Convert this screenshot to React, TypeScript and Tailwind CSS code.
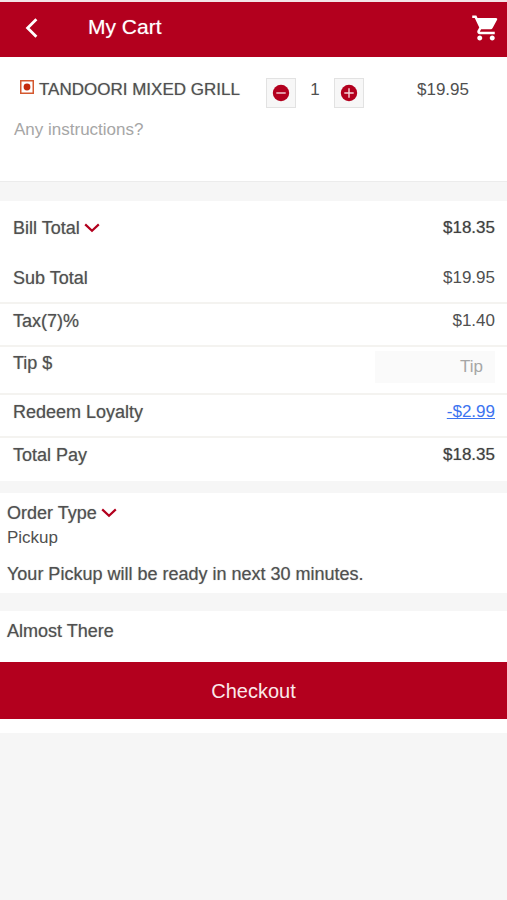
import React, { useState } from 'react';
import { MdShoppingCart } from 'react-icons/md';

interface BillRowProps {
  label: string;
  children: React.ReactNode;
  last?: boolean;
}

const ChevronDown: React.FC = () => (
  <svg width="16" height="10" viewBox="0 0 16 10" fill="none" stroke="#b3001e" strokeWidth="2.2" aria-hidden="true">
    <path d="M1.2 1.4 8 7.8l6.8-6.4" />
  </svg>
);

const NonVegMark: React.FC = () => (
  <svg width="14" height="14" viewBox="0 0 14 14" aria-hidden="true">
    <rect x="0.75" y="0.75" width="12.5" height="12.5" fill="#fff" stroke="#d4582f" strokeWidth="1.5" />
    <circle cx="7" cy="7" r="3.4" fill="#c42a0c" />
  </svg>
);

const StepIcon: React.FC<{ plus?: boolean }> = ({ plus }) => (
  <svg width="18" height="18" viewBox="0 0 18 18" aria-hidden="true">
    <circle cx="9" cy="9" r="8.2" fill="#b3001e" />
    <path d={plus ? 'M4.3 9h9.4M9 4.3v9.4' : 'M4.3 9h9.4'} stroke="#f6d5da" strokeWidth="1.4" />
  </svg>
);

const BillRow: React.FC<BillRowProps> = ({ label, children, last }) => (
  <div className={`flex items-start justify-between pl-[13px] pr-3 pt-[5px] h-[43px] ${last ? '' : 'border-b-2 border-[#f4f3f0]'}`}>
    <span className="text-[18px] leading-6 [text-shadow:0_0_1px_#4a4a4a80]">{label}</span>
    {children}
  </div>
);

export default function App() {
  const [quantity, setQuantity] = useState(1);
  const [tip, setTip] = useState('');
  const [instructions, setInstructions] = useState('');

  return (
    <div className="min-h-screen bg-[#f6f6f6] font-['Liberation_Sans',Arial,sans-serif] text-[17px] leading-6 text-[#505050]">
      <header className="flex items-center h-[57px] border-t-2 border-[#f3e4e6] bg-[#b3001e] text-white pl-[25px] pr-[6px] pb-[3px]">
        <button type="button" aria-label="Back" className="w-[63px]">
          <svg width="13" height="20" viewBox="0 0 13 20" fill="none" stroke="currentColor" strokeWidth="2.8" aria-hidden="true">
            <path d="M11.4 1.2 2.6 10l8.8 8.8" />
          </svg>
        </button>
        <h1 className="flex-1 text-[21px] leading-6 pb-[2px] [text-shadow:0_0_1px_#ffffff80]">My Cart</h1>
        <button type="button" aria-label="Cart">
          <MdShoppingCart size={30} />
        </button>
      </header>

      <main>
        {/* Cart item */}
        <section className="bg-white border-b border-[#ececec] pt-[21px] h-[125px]">
          <div className="flex items-start pl-5 pr-[38px]">
            <div className="flex flex-1 items-start gap-[5px]">
              <div className="pt-[2px]">
                <NonVegMark />
              </div>
              <h2 className="whitespace-nowrap [text-shadow:0_0_1px_#4a4a4a80]">TANDOORI MIXED GRILL</h2>
            </div>
            <div className="flex items-start">
              <button
                type="button"
                aria-label="Decrease quantity"
                onClick={() => setQuantity(Math.max(1, quantity - 1))}
                className="flex items-center justify-center size-[30px] border border-[#e2e2e2] bg-[#f7f7f7]"
              >
                <StepIcon />
              </button>
              <span className="w-[38px] text-center">{quantity}</span>
              <button
                type="button"
                aria-label="Increase quantity"
                onClick={() => setQuantity(quantity + 1)}
                className="flex items-center justify-center size-[30px] border border-[#e2e2e2] bg-[#f7f7f7]"
              >
                <StepIcon plus />
              </button>
            </div>
            <span className="w-[105px] text-right">$19.95</span>
          </div>
          <textarea
            aria-label="Any instructions?"
            placeholder="Any instructions?"
            rows={2}
            value={instructions}
            onChange={(e) => setInstructions(e.target.value)}
            className="block w-full resize-none px-[14px] pt-[10px] leading-6 outline-none placeholder:text-[#a6a6a6]"
          />
        </section>

        {/* Bill breakdown */}
        <section className="mt-[19px] bg-white">
          <div className="flex items-center justify-between h-[53px] pl-[13px] pr-3">
            <button type="button" className="flex items-center gap-1 text-[18px] leading-6 [text-shadow:0_0_1px_#4a4a4a80]">
              Bill Total
              <ChevronDown />
            </button>
            <span className="text-[#404040] [text-shadow:0_0_1px_#3c3c3c80]">$18.35</span>
          </div>
          <div className="pt-[7px]">
            <BillRow label="Sub Total">
              <span>$19.95</span>
            </BillRow>
            <BillRow label="Tax(7)%">
              <span>$1.40</span>
            </BillRow>
            <div className="flex items-start justify-between h-12 pl-[13px] pr-3 pt-1 border-b-2 border-[#f4f3f0]">
              <label htmlFor="tip" className="text-[18px] leading-6 [text-shadow:0_0_1px_#4a4a4a80]">
                Tip $
              </label>
              <input
                id="tip"
                type="text"
                inputMode="decimal"
                placeholder="Tip"
                value={tip}
                onChange={(e) => setTip(e.target.value)}
                className="w-[120px] h-8 pr-3 bg-[#fafafa] text-right outline-none placeholder:text-[#a6a6a6]"
              />
            </div>
            <BillRow label="Redeem Loyalty">
              <a href="#loyalty" className="text-[#3d74f0] underline">
                -$2.99
              </a>
            </BillRow>
            <BillRow label="Total Pay" last>
              <span className="text-[#404040] [text-shadow:0_0_1px_#3c3c3c80]">$18.35</span>
            </BillRow>
          </div>
        </section>

        {/* Order type */}
        <section className="mt-3 bg-white px-[7px] pt-2 pb-[7px]">
          <button type="button" className="flex items-center gap-1 text-[18px] leading-6 [text-shadow:0_0_1px_#4a4a4a80]">
            Order Type
            <ChevronDown />
          </button>
          <p className="pt-px">Pickup</p>
          <p className="pt-3 text-[18px] leading-6 [text-shadow:0_0_1px_#4a4a4a80]">
            Your Pickup will be ready in next 30 minutes.
          </p>
        </section>

        <section className="mt-[18px] bg-white pb-[14px]">
          <h2 className="h-[51px] px-[7px] pt-2 text-[18px] leading-6 [text-shadow:0_0_1px_#4a4a4a80]">Almost There</h2>
          <button type="button" className="block w-full h-[57px] bg-[#b3001e] text-xl text-[#fbe9eb]">
            Checkout
          </button>
        </section>
      </main>
    </div>
  );
}
